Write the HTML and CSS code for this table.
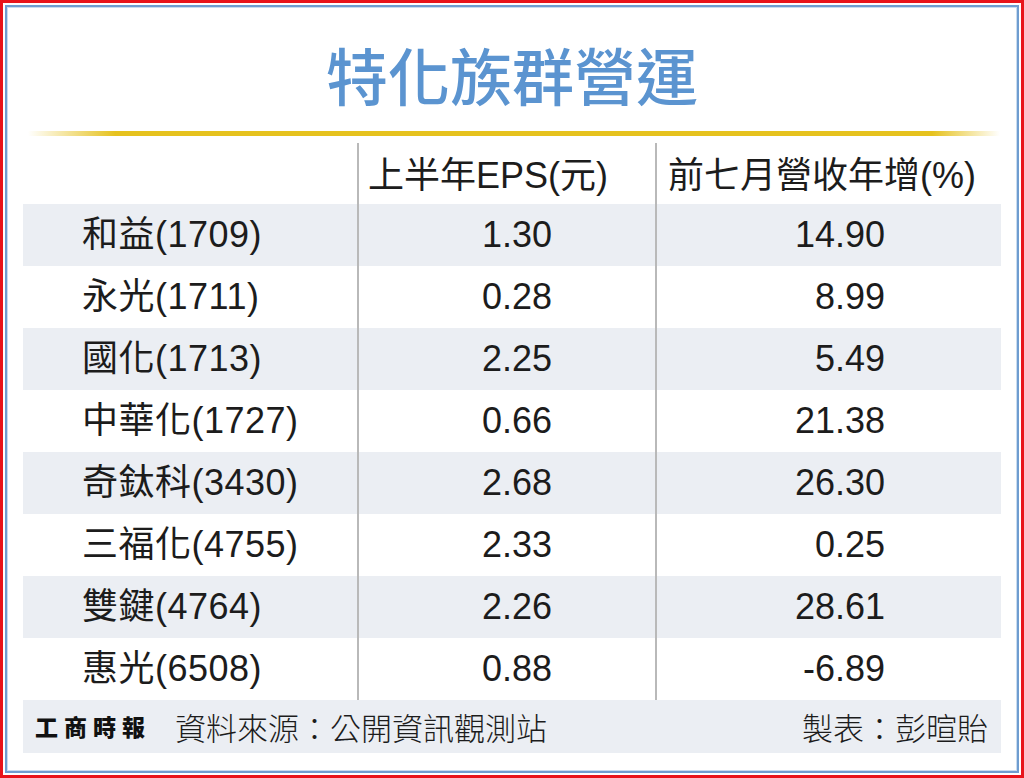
FILE: index.html
```html
<!DOCTYPE html>
<html lang="zh-Hant">
<head>
<meta charset="utf-8">
<title>特化族群營運</title>
<link rel="stylesheet" href="styles.css">
</head>
<body>
<div class="frame">
  <div class="inner">
    <h1 class="title">特化族群營運</h1>
    <div class="goldline"></div>
    <div class="table">
      <div class="row head">
        <div class="c1"></div>
        <div class="c2">上半年EPS(元)</div>
        <div class="c3">前七月營收年增(%)</div>
      </div>
      <div class="row shade"><div class="c1">和益(1709)</div><div class="c2">1.30</div><div class="c3">14.90</div></div>
      <div class="row"><div class="c1">永光(1711)</div><div class="c2">0.28</div><div class="c3">8.99</div></div>
      <div class="row shade"><div class="c1">國化(1713)</div><div class="c2">2.25</div><div class="c3">5.49</div></div>
      <div class="row"><div class="c1">中華化(1727)</div><div class="c2">0.66</div><div class="c3">21.38</div></div>
      <div class="row shade"><div class="c1">奇鈦科(3430)</div><div class="c2">2.68</div><div class="c3">26.30</div></div>
      <div class="row"><div class="c1">三福化(4755)</div><div class="c2">2.33</div><div class="c3">0.25</div></div>
      <div class="row shade"><div class="c1">雙鍵(4764)</div><div class="c2">2.26</div><div class="c3">28.61</div></div>
      <div class="row"><div class="c1">惠光(6508)</div><div class="c2">0.88</div><div class="c3">-6.89</div></div>
      <div class="footer">
        <div class="src"><span class="logo">工商時報</span><span>資料來源：公開資訊觀測站</span></div>
        <div class="maker">製表：彭暄貽</div>
      </div>
    </div>
  </div>
</div>
</body>
</html>
```

FILE: styles.css
```css
* { box-sizing: border-box; }
html, body { margin: 0; padding: 0; background: #fff; }
body {
  width: 1024px;
  height: 778px;
  font-family: "Liberation Sans", "Noto Sans CJK TC", sans-serif;
  color: #1c1c1c;
}
.frame {
  width: 1024px;
  height: 778px;
  border: 3px solid #e8141b;
  padding: 2px;
  background: #fff;
}
.inner {
  width: 100%;
  height: 100%;
  border: 2px solid #6f9dd0;
  box-shadow: inset 0 0 0 1px #c9dcf0;
  display: flex;
  flex-direction: column;
}
.title {
  margin: 0;
  height: 124px;
  display: flex;
  align-items: center;
  justify-content: center;
  font-family: "Noto Sans CJK TC", sans-serif;
  font-weight: 500;
  font-size: 62px;
  line-height: 1;
  color: #5b94d0;
  padding-top: 10px;
}
.goldline {
  margin: 0 17px 0 21px;
  height: 5px;
  background: linear-gradient(to right, rgba(230,194,30,0) 0%, #e6c21e 9%, #e6c21e 93%, rgba(230,194,30,0) 100%);
}
.table {
  margin: 0 16px 0 16px;
  display: flex;
  flex-direction: column;
}
.row {
  display: flex;
  height: 62px;
  align-items: stretch;
  font-size: 36px;
}
.row.head { height: 61px; margin-top: 7px; }
.row.shade { background: #ebeef3; }
.row > div {
  display: flex;
  align-items: center;
  line-height: 1;
}
.c1 { width: 334px; padding-left: 59px; letter-spacing: 0.5px; }
.c2 { width: 298px; border-left: 2px solid #b9b9b9; justify-content: flex-end; padding-right: 103px; }
.c3 { width: 346px; border-left: 2px solid #b9b9b9; justify-content: flex-end; padding-right: 116px; }
.head .c2, .head .c3 { justify-content: flex-start; padding-left: 9px; padding-right: 0; padding-top: 4px; }
.head .c3 { padding-left: 11px; }
.footer {
  height: 53px;
  background: #ebeef3;
  display: flex;
  align-items: center;
  justify-content: space-between;
  padding: 0 13px 0 12px;
  font-family: "Noto Sans CJK TC", sans-serif;
  font-weight: 300;
  font-size: 31px;
  line-height: 1;
}
.src { display: flex; align-items: center; }
.logo {
  font-weight: 900;
  font-size: 23px;
  letter-spacing: 6px;
  margin-right: 24px;
  color: #111;
}
```
